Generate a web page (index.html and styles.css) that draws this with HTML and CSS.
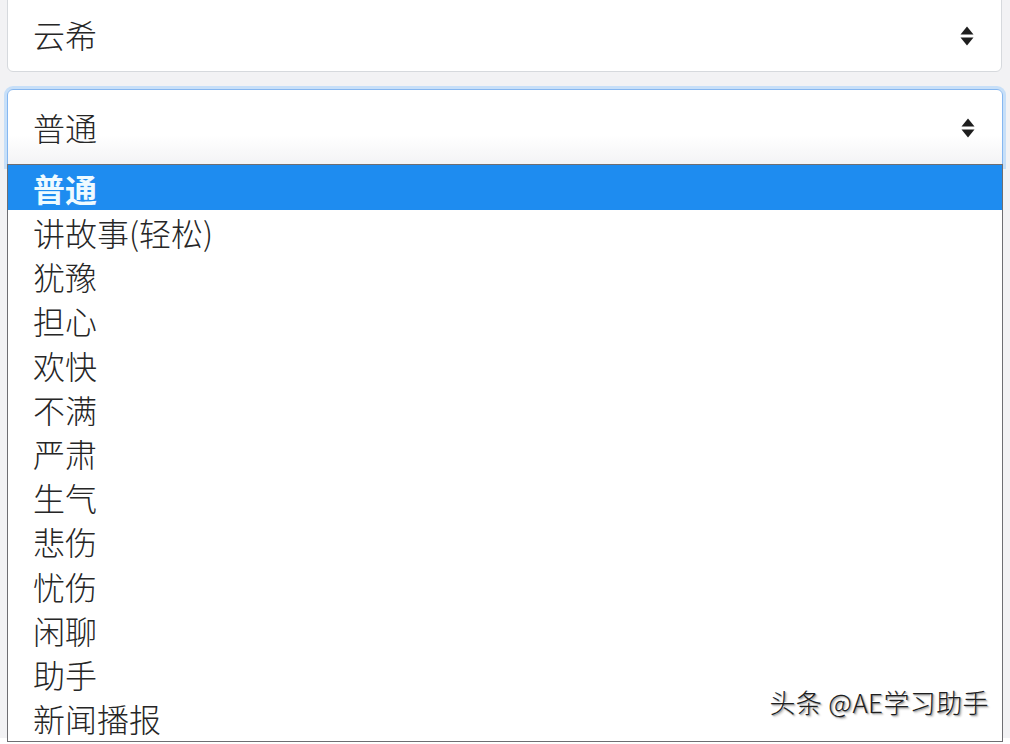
FILE: index.html
```html
<!DOCTYPE html>
<html lang="zh-CN">
<head>
<meta charset="utf-8">
<title>选择</title>
<link rel="stylesheet" href="styles.css">
</head>
<body>
<div class="page">
  <div class="select select-top">
    <span class="select-value">云希</span>
    <svg class="chevron" width="14" height="20" viewBox="0 0 14 20"><path d="M7 0.5 L13.5 8.5 L0.5 8.5 Z M0.5 11.5 L13.5 11.5 L7 19.5 Z" fill="#1e1e1e"/></svg>
  </div>
  <div class="select select-focus">
    <span class="select-value">普通</span>
    <svg class="chevron" width="14" height="20" viewBox="0 0 14 20"><path d="M7 0.5 L13.5 8.5 L0.5 8.5 Z M0.5 11.5 L13.5 11.5 L7 19.5 Z" fill="#1e1e1e"/></svg>
  </div>
  <ul class="listbox">
    <li class="option selected">普通</li>
    <li class="option">讲故事(轻松)</li>
    <li class="option">犹豫</li>
    <li class="option">担心</li>
    <li class="option">欢快</li>
    <li class="option">不满</li>
    <li class="option">严肃</li>
    <li class="option">生气</li>
    <li class="option">悲伤</li>
    <li class="option">忧伤</li>
    <li class="option">闲聊</li>
    <li class="option">助手</li>
    <li class="option">新闻播报</li>
  </ul>
  <div class="watermark">头条 @AE学习助手</div>
</div>
</body>
</html>
```
FILE: styles.css
```css
html, body {
  margin: 0;
  padding: 0;
  background: #ffffff;
}
body {
  font-family: "Noto Sans CJK SC", "Noto Sans", sans-serif;
  width: 1010px;
  height: 744px;
  overflow: hidden;
}
.page {
  position: relative;
  height: 744px;
  padding: 0 7px 0 7px;
  box-sizing: border-box;
  background: #f2f2f4;
}
.select {
  display: flex;
  align-items: center;
  justify-content: space-between;
  background: #ffffff;
  border: 1px solid #d6d9dd;
  border-radius: 6px;
  box-sizing: border-box;
  padding: 0 27px 0 25px;
  color: #262626;
  font-size: 32px;
  font-weight: 300;
}
.select-top {
  height: 78px;
  margin-top: -6px;
  margin-right: 1px;
}
.select-focus {
  margin-top: 17px;
  height: 77px;
  border-color: #86b7f0;
  box-shadow: 0 0 0 3px #c7dff8;
  border-radius: 6px 6px 0 0;
  background: linear-gradient(#ffffff 60%, #f3f3f5);
}
.select-value {
  line-height: 1;
  padding-bottom: 2px;
}
.select-top .select-value {
  padding-top: 3px;
}
.chevron {
  display: block;
}
.select-top .chevron {
  margin-top: 5px;
}
.listbox {
  position: relative;
  list-style: none;
  margin: -2px 0 0 0;
  padding: 0;
  border: 1px solid #6e6e72;
  background: #ffffff;
  box-sizing: border-box;
  height: 578px;
}
.option {
  height: 44.2px;
  line-height: 44.2px;
  padding-left: 25px;
  font-size: 32px;
  font-weight: 300;
  color: #262626;
  white-space: nowrap;
}
.option.selected {
  background: #1e8cf0;
  color: #eefaff;
  font-weight: bold;
  height: 45px;
  line-height: 47px;
}
.watermark {
  position: absolute;
  right: 21px;
  bottom: 18px;
  font-size: 26px;
  font-weight: 300;
  letter-spacing: 0.4px;
  color: #1e1e1e;
  text-shadow: -1px -1px 0 #ffffff, 1px 1px 1px rgba(0,0,0,0.35), 2px 2px 2px rgba(0,0,0,0.2);
}
```
